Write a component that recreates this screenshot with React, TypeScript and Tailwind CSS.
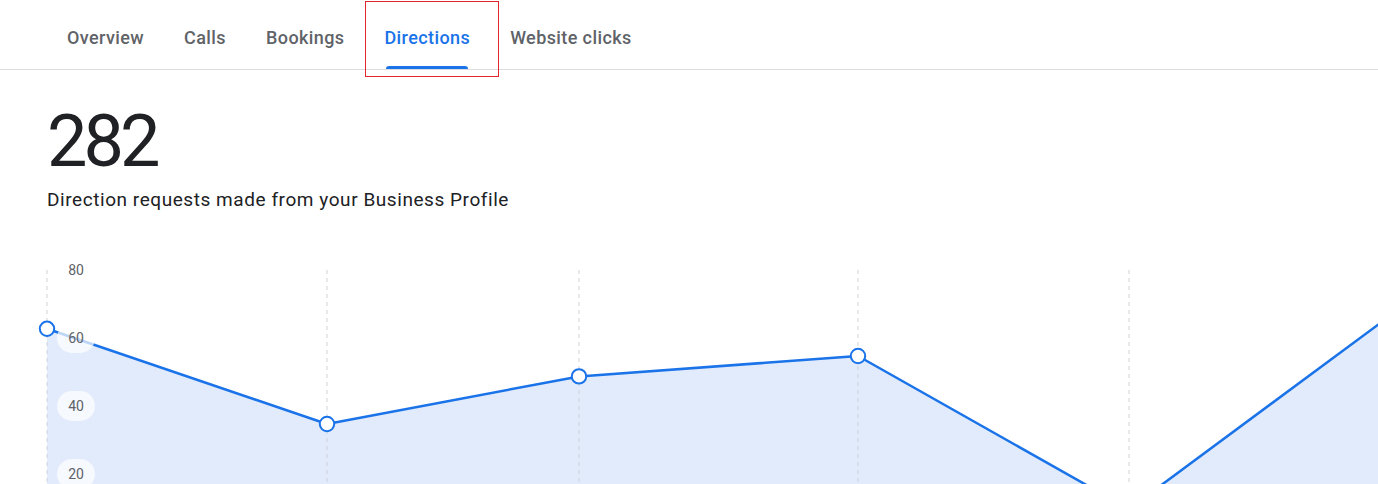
import React from 'react';

const tabs = ['Overview', 'Calls', 'Bookings', 'Directions', 'Website clicks'];

// points: x position on page, value
const points = [
  { x: 47, v: 63 },
  { x: 327, v: 35 },
  { x: 579, v: 49 },
  { x: 858, v: 55 },
  { x: 1129, v: 10 },
  { x: 1400, v: 69 },
];

const yOf = (v: number) => 293 - 3.4 * v;

const Chart: React.FC = () => {
  const line = points.map((p, i) => `${i === 0 ? 'M' : 'L'}${p.x} ${yOf(p.v)}`).join(' ');
  const area = `${line} L1400 400 L47 400 Z`;
  return (
    <div className="relative mt-[38px] h-[300px] w-full overflow-hidden">
      <svg width="1378" height="300" className="absolute left-0 top-0">
        <path d={area} fill="#e2ebfc" />
        {points.slice(0, 5).map(p => (
          <line key={p.x} x1={p.x} x2={p.x} y1={20} y2={300} stroke="#cfd3d8" strokeWidth={1} strokeDasharray="4 4" />
        ))}
        <path d={line} fill="none" stroke="#1a73e8" strokeWidth={2.5} strokeLinejoin="round" />
        {points.map(p => (
          <circle key={p.x} cx={p.x} cy={yOf(p.v)} r={7.2} fill="#ffffff" stroke="#1a73e8" strokeWidth={2} />
        ))}
      </svg>
      <div className="absolute left-[57px] top-[5px] flex flex-col gap-[38px]">
        {['80', '60', '40', '20'].map(l => (
          <div key={l} className="flex h-[30px] w-[38px] items-center justify-center rounded-full bg-white/70 text-[14px] text-[#5f6368]">
            {l}
          </div>
        ))}
      </div>
    </div>
  );
};

export default function App() {
  return (
    <div className="min-h-screen bg-white" style={{ fontFamily: 'Roboto, "Noto Sans", sans-serif' }}>
      <div className="relative flex h-[70px] items-stretch border-b border-[#dadce0] pl-[47px]">
        {tabs.map(t => {
          const active = t === 'Directions';
          return (
            <div key={t} className="relative flex items-center px-5 pt-[6px]">
              <span className={`text-[18px] font-medium tracking-[0.4px] ${active ? 'text-[#1a73e8]' : 'text-[#5f6368]'}`}>{t}</span>
              {active && <div className="absolute bottom-0 left-[22px] right-[22px] h-[3px] rounded-t-[3px] bg-[#1a73e8]" />}
            </div>
          );
        })}
        <div className="pointer-events-none absolute left-[365px] top-[1px] h-[76px] w-[134px] border border-[#e3262b]" />
      </div>
      <div className="pl-[47px]">
        <div className="mt-[36px] text-[72px] leading-none tracking-[-4px] text-[#202124]">282</div>
        <div className="mt-[10px] text-[19px] leading-[24px] tracking-[0.56px] text-[#202124]">Direction requests made from your Business Profile</div>
      </div>
      <Chart />
    </div>
  );
}
